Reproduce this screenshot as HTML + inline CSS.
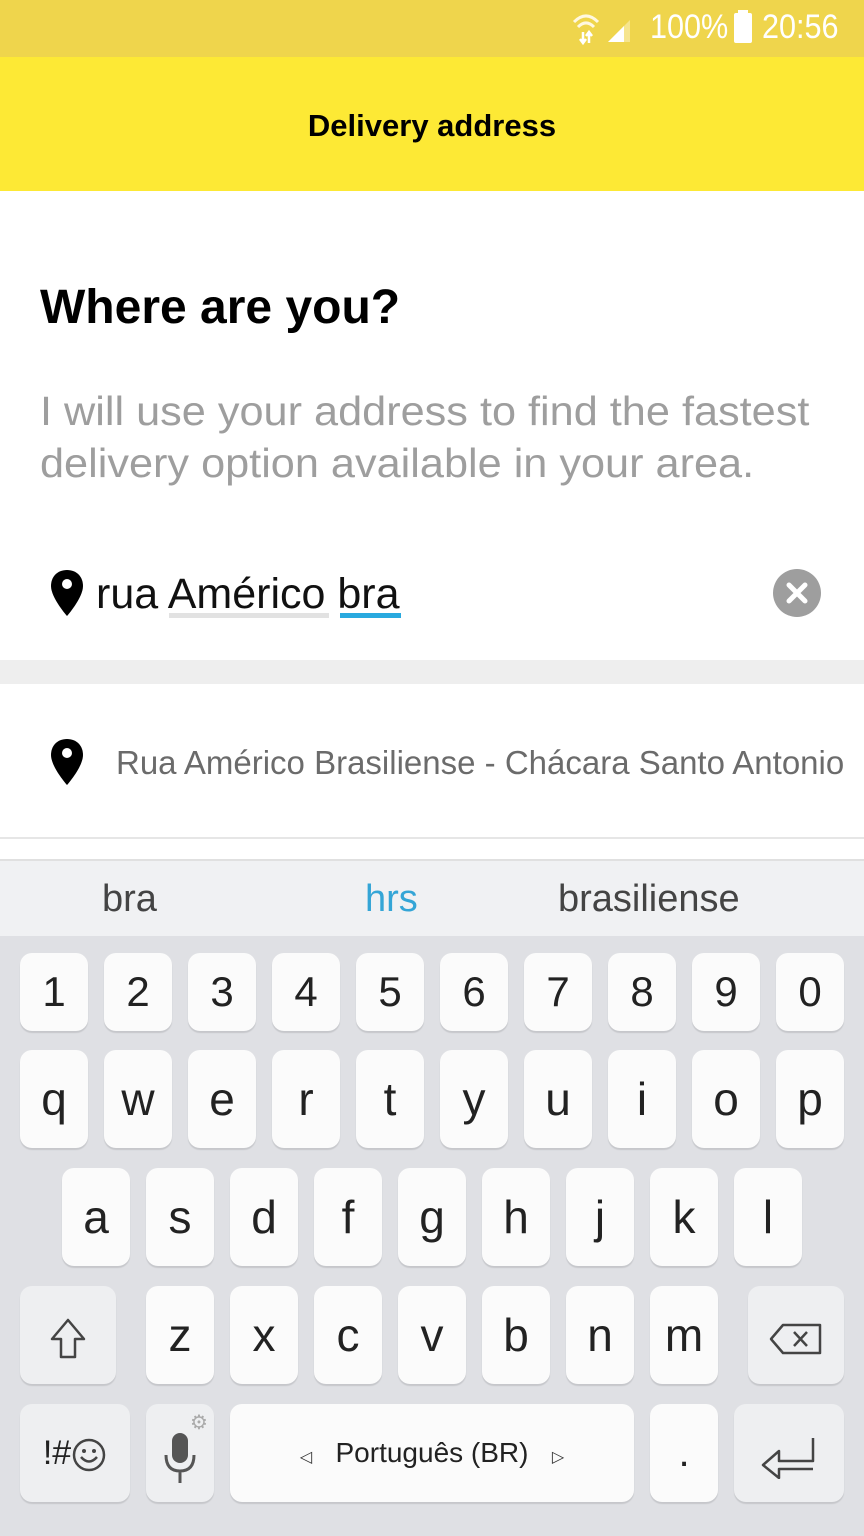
<!DOCTYPE html>
<html><head><meta charset="utf-8"><style>
*{margin:0;padding:0;box-sizing:border-box}
body{width:864px;height:1536px;overflow:hidden;background:#fff;font-family:"Liberation Sans",sans-serif;position:relative}
.a{position:absolute;white-space:nowrap}
.k{position:absolute;background:#fbfbfb;border-radius:12px;box-shadow:0 2px 1px #c6c7cb;text-align:center;color:#222;font-size:46px}
.kd{background:#eeeff1}
</style></head><body>
<div class="a" style="left:0;top:0;width:864px;height:57px;background:#efd54c"></div>
<div class="a" style="left:650px;top:8px;font-size:34px;color:#fff;transform:scaleX(.9);transform-origin:left">100%</div>
<div class="a" style="left:734px;top:13px;width:18px;height:30px;background:#fff;border-radius:2px"></div>
<div class="a" style="left:738px;top:10px;width:10px;height:4px;background:#fff"></div>
<div class="a" style="left:762px;top:8px;font-size:34px;color:#fff;transform:scaleX(.9);transform-origin:left">20:56</div>
<svg class="a" style="left:570px;top:12px" width="70" height="34"><path d="M4 10 Q16 -2 28 10" stroke="#fff8e0" stroke-width="3" fill="none"/><path d="M8 15 Q16 7 24 15" stroke="#fff8e0" stroke-width="3" fill="none"/><path d="M13 30 V20 M10 27 l3 4 3-4 M19 31 V21 M16 24 l3-4 3 4" stroke="#fff" stroke-width="2.5" fill="none"/><path d="M38 30 L60 8 V30Z" fill="#f6e58e"/><path d="M38 30 L54 14 V30Z" fill="#fff"/></svg>
<div class="a" style="left:0;top:57px;width:864px;height:134px;background:#fde935"></div>
<div class="a" style="left:0;top:108px;width:864px;text-align:center;font-size:31px;font-weight:bold;color:#000">Delivery address</div>
<div class="a" style="left:40px;top:280px;font-size:48px;font-weight:bold;color:#000">Where are you?</div>
<div class="a" style="left:40px;top:385px;font-size:41px;line-height:52px;color:#9e9e9e;transform:scaleX(1.055);transform-origin:left">I will use your address to find the fastest<br>delivery option available in your area.</div>
<svg class="a" style="left:49px;top:568px" width="36" height="50"><path d="M18 2 C8 2 2 9 2 18 C2 30 18 48 18 48 C18 48 34 30 34 18 C34 9 28 2 18 2Z" fill="#000"/><circle cx="18" cy="16" r="5" fill="#fff"/></svg>
<div class="a" style="left:96px;top:570px;font-size:43px;color:#111">rua Américo bra</div>
<div class="a" style="left:169px;top:613px;width:160px;height:5px;background:#e2e2e2"></div>
<div class="a" style="left:340px;top:613px;width:61px;height:5px;background:#29a9df"></div>
<div class="a" style="left:773px;top:569px;width:48px;height:48px;border-radius:50%;background:#9e9e9e"></div>
<svg class="a" style="left:773px;top:569px" width="48" height="48"><path d="M16 16 L32 32 M32 16 L16 32" stroke="#fff" stroke-width="5" stroke-linecap="round"/></svg>
<div class="a" style="left:0;top:660px;width:864px;height:24px;background:#eeeeee"></div>
<svg class="a" style="left:49px;top:737px" width="36" height="50"><path d="M18 2 C8 2 2 9 2 18 C2 30 18 48 18 48 C18 48 34 30 34 18 C34 9 28 2 18 2Z" fill="#000"/><circle cx="18" cy="16" r="5" fill="#fff"/></svg>
<div class="a" style="left:116px;top:744px;font-size:33px;color:#6b6b6b">Rua Américo Brasiliense - Chácara Santo Antonio</div>
<div class="a" style="left:0;top:837px;width:864px;height:2px;background:#e6e6e6"></div>
<div class="a" style="left:0;top:859px;width:864px;height:77px;background:#f0f1f3;border-top:2px solid #e0e0e0"></div>
<div class="a" style="left:102px;top:878px;font-size:38px;color:#444">bra</div>
<div class="a" style="left:365px;top:878px;font-size:38px;color:#34a5d6">hrs</div>
<div class="a" style="left:558px;top:878px;font-size:38px;color:#444">brasiliense</div>
<div class="a" style="left:0;top:936px;width:864px;height:600px;background:#dfe0e4"></div>
<div id="kb"></div>
<script>
var h='';
function key(x,y,w,hh,t,cls,fs){h+='<div class="k '+(cls||'')+'" style="left:'+x+'px;top:'+y+'px;width:'+w+'px;height:'+hh+'px;line-height:'+hh+'px;'+(fs?'font-size:'+fs+'px':'')+'">'+t+'</div>';}
'1234567890'.split('').forEach(function(c,i){key(20+84*i,953,68,78,c,'',42)});
'qwertyuiop'.split('').forEach(function(c,i){key(20+84*i,1050,68,98,c)});
'asdfghjkl'.split('').forEach(function(c,i){key(62+84*i,1168,68,98,c)});
'zxcvbnm'.split('').forEach(function(c,i){key(146+84*i,1286,68,98,c)});
key(20,1286,96,98,'<svg width="40" height="44" style="vertical-align:middle"><path d="M20 3 L36 22 H27 V40 H13 V22 H4Z" fill="none" stroke="#444" stroke-width="2.5" stroke-linejoin="round"/></svg>','kd');
key(748,1286,96,98,'<svg width="54" height="34" style="vertical-align:middle"><path d="M14 3 H51 V31 H14 L2 17Z" fill="none" stroke="#444" stroke-width="2.5" stroke-linejoin="round"/><path d="M25 10 L38 24 M38 10 L25 24" stroke="#444" stroke-width="2.5"/></svg>','kd');
key(20,1404,110,98,'!#<svg width="36" height="36" style="vertical-align:middle"><circle cx="18" cy="18" r="15" fill="none" stroke="#444" stroke-width="2.5"/><circle cx="13" cy="14" r="2" fill="#444"/><circle cx="23" cy="14" r="2" fill="#444"/><path d="M10 20 Q18 29 26 20" fill="none" stroke="#444" stroke-width="2.5"/></svg>','kd',34);
key(146,1404,68,98,'<svg width="40" height="60" style="vertical-align:middle"><rect x="12" y="6" width="16" height="30" rx="8" fill="#555"/><path d="M6 28 Q6 44 20 44 Q34 44 34 28 M20 44 V56" stroke="#555" stroke-width="3" fill="none"/></svg>','kd');
key(230,1404,404,98,'<span style="font-size:16px;color:#333">◁</span>&nbsp;&nbsp; Português (BR) &nbsp;&nbsp;<span style="font-size:16px;color:#333">▷</span>','',28);
key(650,1404,68,98,'.','',40);
key(734,1404,110,98,'<svg width="60" height="44" style="vertical-align:middle"><path d="M54 3 V26 H20 V16 L4 30 L20 43 V34 H54" fill="none" stroke="#444" stroke-width="2.5" stroke-linejoin="round"/></svg>','kd');
h+='<div class="a" style="left:190px;top:1410px;font-size:20px;color:#aaa">⚙</div>';
document.getElementById('kb').innerHTML=h;
</script>
</body></html>
